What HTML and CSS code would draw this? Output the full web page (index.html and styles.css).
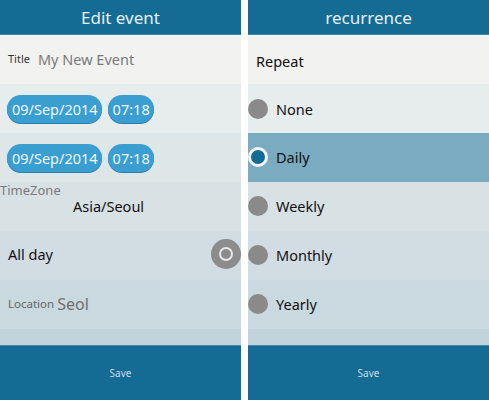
FILE: index.html
```html
<!DOCTYPE html>
<html>
<head>
<meta charset="utf-8">
<link rel="stylesheet" href="styles.css">
</head>
<body>
<div class="screens">
  <div class="panel">
    <div class="header">Edit event</div>
    <div class="list">
      <div class="row r1"><span class="lbl">Title</span><span class="val">My New Event</span></div>
      <div class="row r2"><span class="pill">09/Sep/2014</span><span class="pill">07:18</span></div>
      <div class="row r3"><span class="pill">09/Sep/2014</span><span class="pill">07:18</span></div>
      <div class="row r4 tz"><span class="tzlabel">TimeZone</span><span class="tzval">Asia/Seoul</span></div>
      <div class="row r5 allday"><span class="text">All day</span><span class="toggle"><span class="ring"></span></span></div>
      <div class="row r6"><span class="loclbl">Location</span><span class="locval">Seol</span></div>
      <div class="row r7"></div>
    </div>
    <div class="footer">Save</div>
  </div>
  <div class="panel">
    <div class="header">recurrence</div>
    <div class="list">
      <div class="row r1 repeat"><span class="text">Repeat</span></div>
      <div class="row r2 opt"><span class="radio"></span><span class="text">None</span></div>
      <div class="row sel opt"><span class="radio on"></span><span class="text">Daily</span></div>
      <div class="row r4 opt"><span class="radio"></span><span class="text">Weekly</span></div>
      <div class="row r5 opt"><span class="radio"></span><span class="text">Monthly</span></div>
      <div class="row r6 opt"><span class="radio"></span><span class="text">Yearly</span></div>
      <div class="row r7"></div>
    </div>
    <div class="footer">Save</div>
  </div>
</div>
</body>
</html>
```
FILE: styles.css
```css
html, body { margin: 0; padding: 0; background: #ffffff; }
body { font-family: "Noto Sans", "Open Sans", sans-serif; }
.screens { display: flex; gap: 7px; width: 489px; height: 400px; }
.panel { width: 241px; height: 400px; display: flex; flex-direction: column; }
.header {
  height: 34px; border-bottom: 1px solid #3a86aa;
  background: #146b94; color: #e6f0f5;
  font-size: 17px; display: flex; align-items: center; justify-content: center;
}
.list { flex: 1; overflow: hidden; display: flex; flex-direction: column; }
.row { height: 49px; flex: none; display: flex; align-items: center; padding-left: 8px; padding-bottom: 2px; box-sizing: border-box; color: #1c1c1c; font-size: 14px; }
.r1 { background: #f2f2f0; }
.r2 { background: #e7eced; }
.r3 { background: #dfe6e8; }
.r4 { background: #d8e2e5; }
.r5 { background: #d1dde2; }
.r6 { background: #c9d9df; }
.r7 { background: #c2d4db; }
.sel { background: #7aabc0; }
.repeat { padding-bottom: 0; padding-top: 2px; }
.lbl { font-size: 11px; color: #333; margin-right: 8px; }
.val { font-size: 14.5px; color: #7a7a7a; }
.pill {
  background: #3a9fd0; color: #eef7fb; font-size: 14.5px;
  height: 28px; border-radius: 14px; padding: 0 4px 0 5px;
  display: inline-flex; align-items: center; margin-right: 6px;
  box-shadow: 0 1px 0 #2a7fae;
}
.r2, .r3 { padding-left: 7px; padding-bottom: 0; }
.tz { flex-direction: column; align-items: flex-start; padding-left: 0; justify-content: flex-start; }
.tzlabel { font-size: 13px; color: #7a7a7a; line-height: 16px; }
.tzval { font-size: 14.5px; color: #111; margin-left: 73px; line-height: 18px; margin-top: -1px; }
.allday { justify-content: space-between; padding-right: 0; padding-bottom: 4px; }
.toggle { width: 30px; height: 30px; border-radius: 50%; background: #8c8c8c; display: flex; align-items: center; justify-content: center; }
.ring { width: 10px; height: 10px; border: 2px solid #e8e8e8; border-radius: 50%; }
.loclbl { font-size: 11.5px; color: #666; margin-right: 3px; }
.locval { font-size: 16px; color: #6f6f6f; }
.footer {
  height: 54px; border-top: 1px solid #3f88aa;
  background: #146b94; color: #c9dde8; font-size: 10px;
  display: flex; align-items: center; justify-content: center;
}
.opt { padding-left: 0; }
.radio { width: 20px; height: 20px; border-radius: 50%; background: #8a8a8a; margin-right: 8px; }
.radio.on { width: 14px; height: 14px; background: #146b94; border: 3px solid #f2f6f8; }
.text { font-size: 14.5px; color: #111; }
```
